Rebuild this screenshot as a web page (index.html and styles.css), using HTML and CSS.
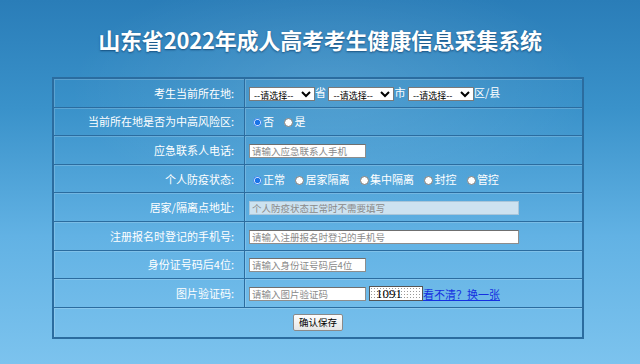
FILE: index.html
```html
<!DOCTYPE html>
<html lang="zh-CN">
<head>
    <meta charset="UTF-8">
    <meta name="viewport" content="width=device-width, initial-scale=1.0">
    <title>山东省2022年成人高考考生健康信息采集系统</title>
    <link rel="stylesheet" href="styles.css">
</head>
<body>
    <h1 class="title">山东省2022年成人高考考生健康信息采集系统</h1>

    <form id="healthForm">
        <table class="info-table">
            <tr>
                <td class="label">考生当前所在地:</td>
                <td class="value">
                    <select class="area"><option>--请选择--</option></select>省
                    <select class="area"><option>--请选择--</option></select>市
                    <select class="area"><option>--请选择--</option></select>区/县
                </td>
            </tr>
            <tr>
                <td class="label">当前所在地是否为中高风险区:</td>
                <td class="value">
                    <label class="radio"><input type="radio" name="risk" checked>否</label>
                    <label class="radio"><input type="radio" name="risk">是</label>
                </td>
            </tr>
            <tr>
                <td class="label">应急联系人电话:</td>
                <td class="value"><input type="text" class="short" placeholder="请输入应急联系人手机"></td>
            </tr>
            <tr>
                <td class="label">个人防疫状态:</td>
                <td class="value">
                    <label class="radio"><input type="radio" name="state" checked>正常</label>
                    <label class="radio"><input type="radio" name="state">居家隔离</label>
                    <label class="radio"><input type="radio" name="state">集中隔离</label>
                    <label class="radio"><input type="radio" name="state">封控</label>
                    <label class="radio"><input type="radio" name="state">管控</label>
                </td>
            </tr>
            <tr>
                <td class="label">居家/隔离点地址:</td>
                <td class="value"><input type="text" class="long" placeholder="个人防疫状态正常时不需要填写" disabled></td>
            </tr>
            <tr>
                <td class="label">注册报名时登记的手机号:</td>
                <td class="value"><input type="text" class="long" placeholder="请输入注册报名时登记的手机号"></td>
            </tr>
            <tr>
                <td class="label">身份证号码后4位:</td>
                <td class="value"><input type="text" class="short" placeholder="请输入身份证号码后4位"></td>
            </tr>
            <tr>
                <td class="label">图片验证码:</td>
                <td class="value">
                    <input type="text" class="short" placeholder="请输入图片验证码"><span class="captcha">1091<span class="noise">:</span></span><a href="#" class="refresh">看不清？换一张</a>
                </td>
            </tr>
            <tr>
                <td colspan="2" class="actions"><button type="submit">确认保存</button></td>
            </tr>
        </table>
    </form>
</body>
</html>
```

FILE: styles.css
```css
body {
    margin: 0;
    height: 364px;
    overflow: hidden;
    font-family: "Noto Sans CJK SC", "Noto Sans", sans-serif;
    color: #fff;
    background-color: #3b93cc;
    background-image:
        radial-gradient(ellipse 260px 120px at 330px 90px, rgba(255, 255, 255, 0.12), rgba(255, 255, 255, 0)),
        linear-gradient(to bottom, #2a7db8 0%, #3a92ca 30%, #62b2e4 65%, #7cc3ee 100%);
}

.title {
    margin: 0;
    padding-top: 24px;
    height: 54px;
    box-sizing: border-box;
    text-align: center;
    font-size: 22px;
    line-height: 30px;
    font-weight: bold;
    letter-spacing: -0.2px;
    text-shadow: 0 1px 2px rgba(0, 40, 80, 0.6);
}

.info-table {
    width: 532px;
    margin: 23px 0 0 52px;
    border-collapse: collapse;
    border: 2px solid #2b6c9f;
}

.info-table td {
    height: 27.6px;
    padding: 0;
    border: 1px solid #2b6c9f;
    box-shadow: inset 1px 1px 0 rgba(255, 255, 255, 0.18);
    font-size: 11px;
    line-height: 14px;
    white-space: nowrap;
}

.label {
    width: 180px;
    padding-right: 10px !important;
    text-align: right;
}

.value {
    padding-left: 4px !important;
}

select.area {
    width: 66px;
    height: 14px;
    padding: 0;
    margin: 0;
    font-size: 9px;
    line-height: 12px;
    font-family: "Noto Sans CJK SC", sans-serif;
    border: 1px solid #7a7a7a;
    background: #fff;
    vertical-align: middle;
}

.radio {
    margin-right: 4px;
}

.radio input {
    width: 9px;
    height: 9px;
    margin: 0 1px 0 4px;
    vertical-align: -1px;
    accent-color: #1a73e8;
}

input[type="text"] {
    height: 14px;
    padding: 0 2px;
    margin: 0;
    box-sizing: border-box;
    border: 1px solid #8d8d8d;
    border-top-color: #6f6f6f;
    font-size: 9.5px;
    font-family: "Noto Sans CJK SC", sans-serif;
    background: #fff;
    vertical-align: middle;
}

input[type="text"]::placeholder {
    color: #8a8a8a;
}

input.short {
    width: 117px;
}

input.long {
    width: 270px;
}

input:disabled {
    background: #cde2f0;
    border-color: #a9c6da;
}

.captcha {
    display: inline-block;
    width: 54px;
    height: 15px;
    margin-left: 3px;
    box-sizing: border-box;
    border: 1px solid #555;
    padding-left: 6px;
    vertical-align: middle;
    color: #000;
    font-family: "Liberation Serif", serif;
    font-size: 13px;
    line-height: 13px;
    background-color: #fff;
    background-image: radial-gradient(circle, #999 0.6px, transparent 0.8px);
    background-size: 3px 3px;
}

.noise {
    color: #999;
    font-size: 9px;
    margin-left: 4px;
}

.refresh {
    color: #1530e0;
    font-size: 11px;
    vertical-align: middle;
}

.actions {
    height: 29px !important;
    text-align: center;
}

button {
    height: 17px;
    padding: 0 5px;
    font-size: 9.5px;
    font-family: "Noto Sans CJK SC", sans-serif;
    color: #000;
    background: linear-gradient(#fdfdfd, #e6e6e6);
    border: 1px solid #8a8a8a;
    border-radius: 2px;
    cursor: pointer;
}
```
